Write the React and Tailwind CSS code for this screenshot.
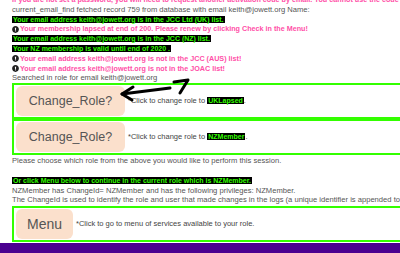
import { FaExclamationCircle } from "react-icons/fa";

function Hl({ children }) {
  return <span className="bg-black text-[#33ff00] font-bold text-[7px] px-[1px]">{children}</span>;
}

function Warn({ children }) {
  return (
    <div className="flex items-center gap-[1px] text-[#ff4fa7] font-bold text-[7.2px]">
      <FaExclamationCircle className="text-[#222] shrink-0" size={7} />
      <span>{children}</span>
    </div>
  );
}

function RoleBox({ label, note, role, wide }) {
  return (
    <div className="flex items-center border-2 border-[#33ff00] w-[600px] h-[36px] px-[2px]">
      <button
        className={`${wide ? "w-[109px] text-[12.5px]" : "w-[57px] text-[14px]"} h-[30px] bg-[#fbe0cc] rounded-[6px] text-[#555] leading-none`}
      >
        {label}
      </button>
      <span className="ml-[3px] text-[7.5px] text-[#444]">
        {note}
        {role && (
          <>
            <Hl>{role}</Hl>.
          </>
        )}
      </span>
    </div>
  );
}

export default function App() {
  return (
    <div
      className="relative w-[400px] h-[253px] overflow-hidden bg-white"
      style={{ fontFamily: '"Liberation Sans", Arial, sans-serif' }}
    >
      <div className="mt-[-5px] pl-[12px] text-[7.6px] leading-[9.8px] text-[#555] whitespace-nowrap">
        <div className="text-[#ff4fa7] font-bold text-[7.2px]">
          If you are not set a password, you will need to request another activation code by email. You cannot use the code sent
        </div>
        <div>current_email_find fetched record 759 from database with email keith@jowett.org Name:</div>
        <div>
          <Hl>Your email address keith@jowett.org is in the JCC Ltd (UK) list.</Hl>
        </div>
        <Warn>Your membership lapsed at end of 200. Please renew by clicking Check in the Menu!</Warn>
        <div>
          <Hl>Your email address keith@jowett.org is in the JCC (NZ) list.</Hl>
        </div>
        <div>
          <Hl>Your NZ membership is valid until end of 2020 .</Hl>
        </div>
        <Warn>Your email address keith@jowett.org is not in the JCC (AUS) list!</Warn>
        <Warn>Your email address keith@jowett.org is not in the JOAC list!</Warn>
        <div>Searched in role for email keith@jowett.org</div>

        <RoleBox label="Change_Role?" note="*Click to change role to " role="UKLapsed" wide />
        <RoleBox label="Change_Role?" note="*Click to change role to " role="NZMember" wide />

        <div className="mt-[1px]">Please choose which role from the above you would like to perform this session.</div>
        <div className="h-[9.8px]" />
        <div>
          <Hl>Or click Menu below to continue in the current role which is NZMember.</Hl>
        </div>
        <div>NZMember has ChangeId= NZMember and has the following privileges: NZMember.</div>
        <div>
          The ChangeId is used to identify the role and user that made changes in the logs (a unique identifier is appended to the
        </div>
        <div className="mt-[1px]">
          <RoleBox label="Menu" note="*Click to go to menu of services available to your role." />
        </div>
      </div>

      <div className="absolute left-0 right-0 bottom-0 h-[10px] bg-[#4b0090]" />

      <svg
        className="absolute left-[110px] top-[70px]"
        width="90"
        height="40"
        viewBox="110 70 90 40"
        fill="none"
        stroke="#000"
        strokeWidth="3"
        strokeLinecap="round"
        strokeLinejoin="round"
      >
        <path d="M174 82 L188 80 L180 93" />
        <path d="M170 88 L122 94" />
        <path d="M133 87 L122 94 L132 100" />
      </svg>
    </div>
  );
}
